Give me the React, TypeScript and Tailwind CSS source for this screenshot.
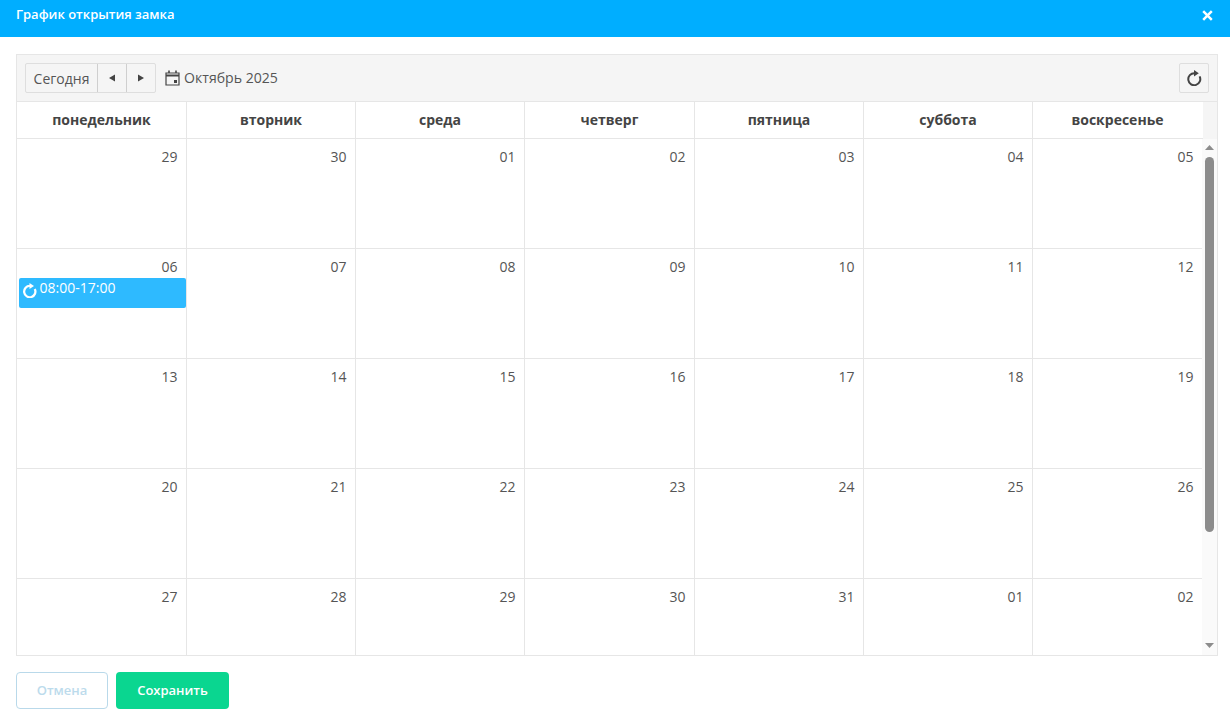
import React from "react";

const days = ["понедельник", "вторник", "среда", "четверг", "пятница", "суббота", "воскресенье"];
const weeks = [
  ["29", "30", "01", "02", "03", "04", "05"],
  ["06", "07", "08", "09", "10", "11", "12"],
  ["13", "14", "15", "16", "17", "18", "19"],
  ["20", "21", "22", "23", "24", "25", "26"],
  ["27", "28", "29", "30", "31", "01", "02"],
];

function Refresh({ size, color, sw }: { size: number; color: string; sw: number }) {
  return (
    <svg width={size} height={size} viewBox="0 0 16 16" fill="none">
      <path d="M8.5 3.2A6 6 0 1 0 13.6 6.4" stroke={color} strokeWidth={sw} />
      <path d="M8 0 L12.8 3.2 L8 6.4 Z" fill={color} />
    </svg>
  );
}

export default function App() {
  return (
    <div className="w-[1230px] h-[722px] bg-white overflow-hidden font-['Open_Sans',sans-serif] text-[#444]">
      <div className="h-[37px] bg-[#00aeff] flex items-center justify-between pl-4 pr-[17px] pb-[7px] text-white">
        <span className="text-[13px] font-semibold leading-none pb-px">График открытия замка</span>
        <svg width="11" height="11" viewBox="0 0 11 11">
          <path d="M1.2 1.2 L9.8 9.8 M9.8 1.2 L1.2 9.8" stroke="#fff" strokeWidth="2.5" />
        </svg>
      </div>
      <div className="mx-4 mt-[17px] w-[1202px] h-[602px] border border-[#e6e6e6] flex flex-col">
        <div className="h-[46px] shrink-0 bg-[#f5f5f5] flex items-center pl-2 pr-2">
          <div className="flex h-[30px] border border-[#dedede] rounded-[2px] text-[14px] text-[#555]">
            <div className="w-[71px] flex items-center justify-center">Сегодня</div>
            <div className="w-[29px] border-l border-[#cfcfcf] flex items-center justify-center">
              <svg width="8" height="10" viewBox="0 0 8 10"><path d="M7 1.5 V8.5 L1 5 Z" fill="#444" /></svg>
            </div>
            <div className="w-[29px] border-l border-[#cfcfcf] flex items-center justify-center">
              <svg width="8" height="10" viewBox="0 0 8 10"><path d="M1 1.5 V8.5 L7 5 Z" fill="#444" /></svg>
            </div>
          </div>
          <svg className="ml-[9px]" width="15" height="16" viewBox="0 0 15 16" fill="none">
            <path d="M1 3 H14 V15 H1 Z" stroke="#444" strokeWidth="1.2" />
            <path d="M1 5.5 H14" stroke="#444" strokeWidth="2" />
            <path d="M4 0.5 V3 M11 0.5 V3" stroke="#444" strokeWidth="1.6" />
            <rect x="9" y="10" width="3" height="3" fill="#444" />
          </svg>
          <span className="ml-1 text-[14.1px] leading-[20px] text-[#555]">Октябрь 2025</span>
          <div className="ml-auto w-[30px] h-[30px] border border-[#dedede] rounded-[2px] flex items-center justify-center">
            <Refresh size={16} color="#444" sw={2} />
          </div>
        </div>
        <div className="h-[38px] shrink-0 flex border-t border-[#e6e6e6] bg-[#f5f5f5]">
          <div className="flex-1 grid grid-cols-[170px_169px_169px_170px_169px_169px_170px] bg-white border-b border-[#e6e6e6]">
            {days.map((d, i) => (
              <div
                key={d}
                className={`flex items-center justify-center pb-px text-[14px] font-bold text-[#444] border-r ${i < 6 ? "border-[#e6e6e6]" : "border-transparent"}`}
              >
                {d}
              </div>
            ))}
          </div>
          <div className="w-[15px] shrink-0" />
        </div>
        <div className="flex-1 min-h-0 flex overflow-hidden">
          <div className="flex-1 min-w-0">
            {weeks.map((w, r) => (
              <div key={r} className="h-[110px] grid grid-cols-[170px_169px_169px_170px_169px_169px_170px] border-b border-[#e6e6e6] last:border-b-0">
                {w.map((n, c) => (
                  <div key={c} className={`relative pt-[8px] pr-[8.5px] text-right text-[14px] leading-[20px] text-[#555] border-r ${c < 6 ? "border-[#e6e6e6]" : "border-transparent"}`}>
                    {n}
                    {r === 1 && c === 0 && (
                      <div className="absolute left-[2px] right-0 top-[29px] h-[30px] bg-[#2ebaff] rounded-[2px] flex items-start pl-[3px] text-white text-[14px] leading-[20px] text-left">
                        <span className="mt-[5px] mr-[2.5px]"><Refresh size={15} color="#fff" sw={2.4} /></span>
                        <span>08:00-17:00</span>
                      </div>
                    )}
                  </div>
                ))}
              </div>
            ))}
          </div>
          <div className="w-[15px] shrink-0 bg-[#fafafa] flex flex-col items-center">
            <svg className="mt-[6px]" width="9" height="5" viewBox="0 0 9 5"><path d="M0 5 L4.5 0 L9 5 Z" fill="#8c8c8c" /></svg>
            <div className="mt-[7px] w-[9px] h-[375px] rounded-[5px] bg-[#8c8c8c]" />
            <svg className="mt-auto mb-[7px]" width="9" height="5" viewBox="0 0 9 5"><path d="M0 0 L4.5 5 L9 0 Z" fill="#8c8c8c" /></svg>
          </div>
        </div>
      </div>
      <div className="mx-4 mt-4 flex gap-2">
        <button className="w-[92px] h-[37px] rounded-[4px] border border-[#b9d9ea] bg-white text-[13px] font-semibold text-[#bcdbec]">Отмена</button>
        <button className="w-[113px] h-[37px] rounded-[4px] bg-[#0ad690] text-[13px] font-semibold text-white">Сохранить</button>
      </div>
    </div>
  );
}
